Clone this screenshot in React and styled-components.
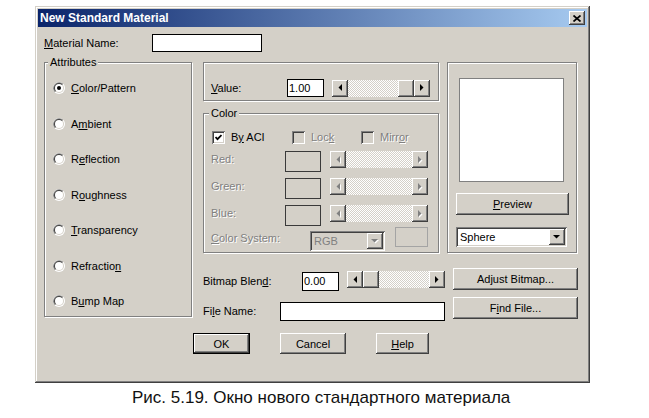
import React from "react";
import styled, { createGlobalStyle, css } from "styled-components";

const face = "#d4d0c8";

const GlobalStyle = createGlobalStyle`
  html, body { margin: 0; padding: 0; background: #fff; }
  body {
    font-family: "Liberation Sans", Arial, sans-serif;
    font-size: 11px;
    color: #000;
  }
`;

const raised = css`
  background: ${face};
  box-shadow: inset -1px -1px #404040, inset 1px 1px #fff,
    inset -2px -2px #808080, inset 2px 2px ${face};
`;

const sunken = css`
  box-shadow: inset 1px 1px #808080, inset -1px -1px #fff,
    inset 2px 2px #404040, inset -2px -2px ${face};
`;

const Page = styled.div`
  width: 649px;
  height: 418px;
  box-sizing: border-box;
  padding: 6px 0 0 35px;
  overflow: hidden;
`;

const Window = styled.div`
  width: 555px;
  height: 377px;
  box-sizing: border-box;
  padding: 3px;
  background: ${face};
  box-shadow: inset -1px -1px #404040, inset 1px 1px ${face},
    inset -2px -2px #808080, inset 2px 2px #fff;
  display: flex;
  flex-direction: column;
`;

const TitleBar = styled.div`
  height: 18px;
  flex: none;
  display: flex;
  align-items: center;
  justify-content: space-between;
  padding: 0 2px 0 2px;
  background: linear-gradient(to right, #0a246a, #a6caf0);
  color: #fff;
  font-weight: bold;
  font-size: 12px;
`;

const CloseBtn = styled.div`
  ${raised};
  width: 16px;
  height: 14px;
  display: flex;
  align-items: center;
  justify-content: center;
`;

const Body = styled.div`
  flex: 1;
  display: flex;
  flex-direction: column;
  padding: 7px 0 0 6px;
`;

const NameRow = styled.div`
  display: flex;
  align-items: center;
  height: 18px;
`;

const Label = styled.span`
  flex: none;
  width: ${(p) => (p.$w ? p.$w + "px" : "auto")};
  margin-top: ${(p) => p.$mt || 0}px;
  line-height: ${(p) => p.$lh || 13}px;
  white-space: nowrap;
  color: ${(p) => (p.$disabled ? "#808080" : "#000")};
  text-shadow: ${(p) => (p.$disabled ? "1px 1px #fff" : "none")};
`;

const U = styled.span`
  text-decoration: underline;
`;

const TextField = styled.div`
  flex: none;
  box-sizing: border-box;
  width: ${(p) => p.$w}px;
  height: ${(p) => p.$h}px;
  margin-top: ${(p) => p.$mt || 0}px;
  border: 1px solid #000;
  background: #fff;
  padding-left: 1px;
  line-height: ${(p) => p.$h - 2}px;
`;

const Main = styled.div`
  display: flex;
  align-items: flex-start;
  margin-top: 10px;
`;

const Group = styled.div`
  position: relative;
  flex: none;
  box-sizing: border-box;
  width: ${(p) => p.$w}px;
  height: ${(p) => p.$h}px;
  margin-top: ${(p) => p.$mt || 0}px;
  border: 1px solid #808080;
  box-shadow: inset 1px 1px #fff, 1px 1px #fff;
  display: flex;
  flex-direction: column;
`;

const Legend = styled.span`
  position: absolute;
  top: -7px;
  left: ${(p) => p.$left}px;
  padding: 0 2px;
  line-height: 13px;
  background: ${face};
`;

const RadioList = styled.div`
  display: flex;
  flex-direction: column;
  gap: 21.5px;
  padding: 18px 0 0 8px;
`;

const RadioItem = styled.div`
  display: flex;
  align-items: center;
  gap: 6px;
  height: 14px;
  line-height: 14px;
`;

const RightArea = styled.div`
  width: 375px;
  margin-left: 11px;
  display: flex;
  flex-direction: column;
`;

const TopRow = styled.div`
  display: flex;
  gap: 8px;
`;

const MiddleCol = styled.div`
  width: 236px;
  display: flex;
  flex-direction: column;
`;

const Row = styled.div`
  display: flex;
  align-items: ${(p) => p.$align || "flex-start"};
  margin: ${(p) => p.$mt || 0}px 0 0 ${(p) => p.$ml || 0}px;
`;

const CheckItem = styled.div`
  display: flex;
  align-items: center;
  gap: 6px;
  width: ${(p) => (p.$w ? p.$w + "px" : "auto")};
  height: 13px;
`;

const CheckBox = styled.span`
  ${sunken};
  width: 13px;
  height: 13px;
  flex: none;
  background: ${(p) => (p.$disabled ? face : "#fff")};
  display: flex;
  align-items: center;
  justify-content: center;
`;

const Swatch = styled.div`
  flex: none;
  box-sizing: border-box;
  width: ${(p) => p.$w}px;
  height: ${(p) => p.$h}px;
  margin-left: ${(p) => p.$ml || 0}px;
  border: 1px solid ${(p) => p.$edge || "#3a3a3a"};
  background: ${face};
`;

const ScrollWrap = styled.div`
  flex: none;
  display: flex;
  width: ${(p) => p.$w}px;
  height: 17px;
  margin: ${(p) => p.$mt || 0}px 0 0 ${(p) => p.$ml || 0}px;
`;

const ArrowBtn = styled.div`
  ${raised};
  width: 16px;
  height: 17px;
  flex: none;
  display: flex;
  align-items: center;
  justify-content: center;
`;

const Track = styled.div`
  flex: 1;
  display: flex;
  justify-content: ${(p) => (p.$at === "end" ? "flex-end" : "flex-start")};
  background: repeating-conic-gradient(#fff 0 25%, ${face} 0 50%) 0 0 / 2px 2px;
`;

const Thumb = styled.div`
  ${raised};
  width: 16px;
`;

const ComboBox = styled.div`
  ${sunken};
  flex: none;
  box-sizing: border-box;
  width: ${(p) => p.$w}px;
  height: 20px;
  margin: ${(p) => p.$mt || 0}px 0 0 ${(p) => p.$ml || 0}px;
  padding: 2px;
  display: flex;
  align-items: center;
  background: ${(p) => (p.$disabled ? face : "#fff")};
`;

const ComboText = styled.span`
  flex: 1;
  padding-left: 2px;
  color: ${(p) => (p.$disabled ? "#808080" : "#000")};
`;

const ComboBtn = styled.div`
  ${raised};
  width: 16px;
  height: 16px;
  flex: none;
  display: flex;
  align-items: center;
  justify-content: center;
`;

const PreviewArea = styled.div`
  box-sizing: border-box;
  width: 105px;
  height: 104px;
  margin: 15px 0 0 11px;
  border: 1px solid #808080;
  background: #fff;
`;

const Button = styled.div`
  ${raised};
  flex: none;
  box-sizing: border-box;
  width: ${(p) => p.$w}px;
  height: ${(p) => p.$h || 21}px;
  margin: ${(p) => p.$mt || 0}px 0 0 ${(p) => p.$ml || 0}px;
  display: flex;
  align-items: center;
  justify-content: center;
  ${(p) =>
    p.$default &&
    css`
      border: 1px solid #000;
      box-shadow: inset -1px -1px #404040, inset 1px 1px #fff,
        inset -2px -2px #808080;
    `}
`;

const ButtonRow = styled.div`
  display: flex;
  gap: 30px;
  margin-top: 12px;
  padding-left: 149px;
`;

const Caption = styled.div`
  margin: 5px 0 0 97px;
  font-size: 17px;
  line-height: 20px;
  color: #111;
  white-space: nowrap;
`;

function Tri({ dir, disabled }) {
  const shapes = {
    left: { w: 4, h: 7, pts: "4,0 4,7 0.5,3.5" },
    right: { w: 4, h: 7, pts: "0,0 0,7 3.5,3.5" },
    down: { w: 7, h: 4, pts: "0,0 7,0 3.5,3.5" },
  };
  const s = shapes[dir];
  return (
    <svg width={s.w + 1} height={s.h + 1} viewBox={`0 0 ${s.w + 1} ${s.h + 1}`}>
      {disabled && <polygon points={s.pts} fill="#fff" transform="translate(1 1)" />}
      <polygon points={s.pts} fill={disabled ? "#808080" : "#000"} />
    </svg>
  );
}

function Radio({ checked }) {
  return (
    <svg width="12" height="12" viewBox="0 0 12 12" style={{ flex: "none" }}>
      <circle cx="6" cy="6" r="6" fill="#fff" />
      <path d="M1.76 10.24 A6 6 0 0 1 10.24 1.76 L6 6Z" fill="#808080" />
      <circle cx="6" cy="6" r="5" fill={face} />
      <path d="M2.46 9.54 A5 5 0 0 1 9.54 2.46 L6 6Z" fill="#404040" />
      <circle cx="6" cy="6" r="4" fill="#fff" />
      {checked && <circle cx="6" cy="6" r="2" fill="#000" />}
    </svg>
  );
}

function Check({ checked, disabled, children, w }) {
  return (
    <CheckItem $w={w}>
      <CheckBox $disabled={disabled}>
        {checked && (
          <svg width="7" height="7" viewBox="0 0 7 7">
            <polyline points="0.5,3 2.5,5.2 6.5,1" fill="none" stroke="#000" strokeWidth="1.8" />
          </svg>
        )}
      </CheckBox>
      <Label $disabled={disabled}>{children}</Label>
    </CheckItem>
  );
}

function ScrollBar({ w, at, disabled, mt, ml }) {
  return (
    <ScrollWrap $w={w} $mt={mt} $ml={ml}>
      <ArrowBtn>
        <Tri dir="left" disabled={disabled} />
      </ArrowBtn>
      <Track $at={at}>{!disabled && <Thumb />}</Track>
      <ArrowBtn>
        <Tri dir="right" disabled={disabled} />
      </ArrowBtn>
    </ScrollWrap>
  );
}

function Combo({ w, text, disabled, mt, ml }) {
  return (
    <ComboBox $w={w} $disabled={disabled} $mt={mt} $ml={ml}>
      <ComboText $disabled={disabled}>{text}</ComboText>
      <ComboBtn>
        <Tri dir="down" disabled={disabled} />
      </ComboBtn>
    </ComboBox>
  );
}

const attributes = [
  [<U key="u">C</U>, "olor/Pattern"],
  ["A", <U key="u">m</U>, "bient"],
  ["R", <U key="u">e</U>, "flection"],
  ["R", <U key="u">o</U>, "ughness"],
  [<U key="u">T</U>, "ransparency"],
  ["Refractio", <U key="u">n</U>],
  ["B", <U key="u">u</U>, "mp Map"],
];

const channels = ["Red:", "Green:", "Blue:"];

export default function App() {
  return (
    <Page>
      <GlobalStyle />
      <Window>
        <TitleBar>
          <span>New Standard Material</span>
          <CloseBtn>
            <svg width="8" height="7" viewBox="0 0 8 7">
              <path d="M0.5 0.5 L7.5 6.5 M7.5 0.5 L0.5 6.5" stroke="#000" strokeWidth="1.7" />
            </svg>
          </CloseBtn>
        </TitleBar>
        <Body>
          <NameRow>
            <Label $w={108}>
              <U>M</U>aterial Name:
            </Label>
            <TextField $w={110} $h={18} />
          </NameRow>

          <Main>
            <Group $w={148} $h={255}>
              <Legend $left={3}>Attributes</Legend>
              <RadioList>
                {attributes.map((parts, i) => (
                  <RadioItem key={i}>
                    <Radio checked={i === 0} />
                    <span>{parts}</span>
                  </RadioItem>
                ))}
              </RadioList>
            </Group>

            <RightArea>
              <TopRow>
                <MiddleCol>
                  <Group $w={236} $h={39}>
                    <Row $align="center" $mt={16} $ml={7}>
                      <Label $w={76}>
                        <U>V</U>alue:
                      </Label>
                      <TextField $w={37} $h={18}>1.00</TextField>
                      <ScrollBar w={98} at="end" ml={8} />
                    </Row>
                  </Group>

                  <Group $w={236} $h={140} $mt={12}>
                    <Legend $left={5}>Color</Legend>
                    <Row $mt={17} $ml={8}>
                      <Check checked w={80}>
                        B<U>y</U> ACI
                      </Check>
                      <Check disabled w={69}>
                        Loc<U>k</U>
                      </Check>
                      <Check disabled>
                        Mirr<U>o</U>r
                      </Check>
                    </Row>
                    {channels.map((c, i) => (
                      <Row key={c} $mt={i === 0 ? 7 : 6} $ml={7}>
                        <Label $w={74} $lh={17} $disabled>
                          {c}
                        </Label>
                        <Swatch $w={36} $h={21} />
                        <ScrollBar w={98} disabled ml={9} />
                      </Row>
                    ))}
                    <Row $mt={1} $ml={7}>
                      <Label $w={99} $lh={22} $disabled>
                        <U>C</U>olor System:
                      </Label>
                      <Combo w={75} text="RGB" disabled mt={4} />
                      <Swatch $w={33} $h={20} $ml={10} $edge="#a4a4a4" />
                    </Row>
                  </Group>
                </MiddleCol>

                <Group $w={130} $h={191}>
                  <PreviewArea />
                  <Button $w={113} $h={22} $mt={11} $ml={8}>
                    <span>
                      <U>P</U>review
                    </span>
                  </Button>
                  <Combo w={111} text="Sphere" mt={12} ml={8} />
                </Group>
              </TopRow>

              <Row $mt={15}>
                <Label $w={99} $mt={4} $lh={19}>
                  Bitmap Blen<U>d</U>:
                </Label>
                <TextField $w={37} $h={19} $mt={4}>0.00</TextField>
                <ScrollBar w={98} at="start" mt={3} ml={8} />
                <Button $w={125} $h={22} $ml={8}>
                  Adjust Bitmap...
                </Button>
              </Row>

              <Row $mt={6}>
                <Label $w={77} $mt={5} $lh={19}>
                  Fi<U>l</U>e Name:
                </Label>
                <TextField $w={165} $h={19} $mt={5} />
                <Button $w={125} $h={22} $ml={8}>
                  <span>
                    F<U>i</U>nd File...
                  </span>
                </Button>
              </Row>
            </RightArea>
          </Main>

          <ButtonRow>
            <Button $w={57} $default>
              OK
            </Button>
            <Button $w={66}>Cancel</Button>
            <Button $w={53}>
              <span>
                <U>H</U>elp
              </span>
            </Button>
          </ButtonRow>
        </Body>
      </Window>
      <Caption>Рис. 5.19. Окно нового стандартного материала</Caption>
    </Page>
  );
}
